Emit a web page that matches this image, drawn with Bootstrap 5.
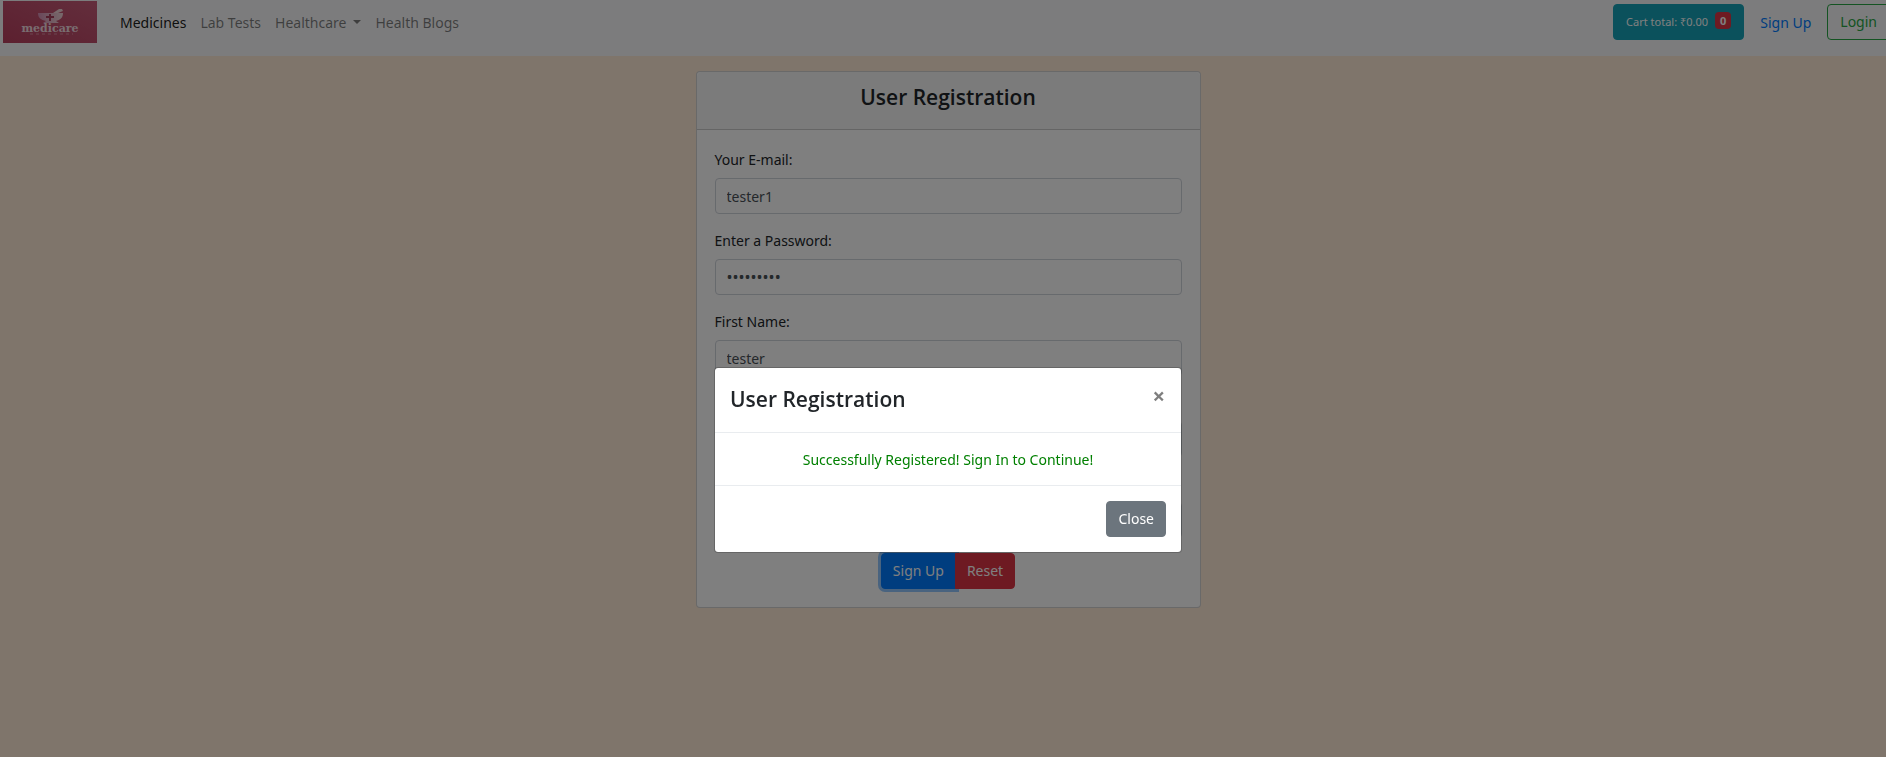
<!DOCTYPE html>
<html lang="en">
<head>
<meta charset="utf-8">
<meta name="viewport" content="width=device-width, initial-scale=1">
<title>Medicare - User Registration</title>
<link href="https://cdn.jsdelivr.net/npm/bootstrap@5.3.0/dist/css/bootstrap.min.css" rel="stylesheet">
<style>
  body { font-family: "Noto Sans", "Open Sans", sans-serif; font-size: 14px; line-height: 24px; color: #212529; background: #ffebd7; overflow: hidden; min-height: 100vh; }
  .topbar { height: 56px; padding: 1px 0 0 3px; background: #f8f9fa; align-items: flex-start; flex-wrap: nowrap; }
  .brand-logo { display: block; width: 94px; height: 42px; }
  .topbar .nav-link { padding: 10px 7px; font-size: 14px; line-height: 24px; color: rgba(0,0,0,.5); }
  .topbar .nav-link.active { color: rgba(0,0,0,.9); }
  .topbar .dropdown-toggle::after { margin-left: 7px; }
  .main-links { margin-left: 16px; }
  .account-links { gap: 16px; padding-top: 3px; margin-right: -4px; }
  .btn { height: 36px; padding: 0 12px; font-size: 14px; line-height: 34px; border-radius: 4px; }
  .btn-cart { background: #17a2b8; border-color: #17a2b8; color: #fff; font-size: 11px; }
  .btn-cart .badge { background: #dc3545; font-size: 11px; line-height: 11px; padding: 3px 5px; margin-left: 4px; border-radius: 4px; }
  .link-signup { color: #007bff; text-decoration: none; line-height: 38px; }
  .btn-login { color: #28a745; border-color: #28a745; }
  .page-area { padding: 15px 0 0 10px; }
  .register-card { width: 505px; max-width: 100%; margin: 0 auto; border-radius: 4px; }
  .register-card .card-header { padding: 11px 20px 17px; background: #f7f7f7; }
  h4 { font-family: "Open Sans", "Noto Sans", sans-serif; font-size: 21px; line-height: 29px; font-weight: 600; margin: 0; }
  .register-card .card-body { padding: 18px; }
  .field { min-height: 66px; margin-bottom: 15px; }
  .field label { display: block; margin-bottom: 6px; }
  .form-control { height: 36px; padding: 0 11px; font-size: 14px; line-height: 34px; color: #495057; border-color: #ced4da; border-radius: 4px; }
  .form-control[type="password"] { font-size: 16px; }
  .btn-group .btn { padding: 0 11px; }
  .btn-primary { background: #007bff; border-color: #007bff; box-shadow: 0 0 0 3px rgba(38,143,255,.5); }
  .btn-danger { background: #dc3545; border-color: #dc3545; }
  .modal { padding-left: 10px; }
  .modal-backdrop { z-index: 1040; }
  .modal-dialog { max-width: 468px; margin: 367px auto 0; }
  .modal-content { border-color: rgba(0,0,0,.2); border-radius: 4px; }
  .modal-header { height: 65px; padding: 17px 15px; align-items: flex-start; border-color: #e9ecef; }
  .modal-body { padding: 15px 15px 13px; color: green; text-align: center; }
  .modal-footer { padding: 15px; border-color: #e9ecef; }
  .modal-footer > * { margin: 0; }
  .modal-footer .btn { padding: 0 11px; }
  .btn-x { border: 0; padding: 0 1px 0 0; background: none; font-size: 22px; line-height: 20px; font-weight: 700; opacity: .5; }
</style>
</head>
<body>
<nav class="topbar navbar navbar-light">
  <a href="#" aria-label="medicare">
    <svg class="brand-logo" viewBox="0 0 94 42">
      <defs><linearGradient id="lg" x1="0" y1="1" x2="1" y2="0"><stop offset="0" stop-color="#b8405f"/><stop offset="1" stop-color="#c75c79"/></linearGradient>
      <linearGradient id="bowl" x1="0" y1="0" x2="1" y2="0"><stop offset="0" stop-color="#d58fb4"/><stop offset="1" stop-color="#f0d3d6"/></linearGradient></defs>
      <rect width="94" height="42" fill="url(#lg)"/>
      <path d="M35 12h25c0 5-3 7-7 8l3 2H40l3-2c-5-1-8-3-8-8z" fill="url(#bowl)"/>
      <path d="M50 12l6-4h3l1 2-5 2z" fill="#f0d3d6"/>
      <path d="M47 13v7M43 16h8" stroke="#a83c5b" stroke-width="2"/>
      <text x="47" y="31" text-anchor="middle" font-family="DejaVu Serif, serif" font-weight="700" font-size="11" fill="#f3dbe1">medicare</text>
      <path d="M27 33h43" stroke="#d88ba0" stroke-width="1" stroke-dasharray="3 3"/>
    </svg>
  </a>
  <ul class="main-links nav me-auto">
    <li class="nav-item"><a class="nav-link active" href="#">Medicines</a></li>
    <li class="nav-item"><a class="nav-link" href="#">Lab Tests</a></li>
    <li class="nav-item dropdown"><a class="nav-link dropdown-toggle" href="#">Healthcare</a></li>
    <li class="nav-item"><a class="nav-link" href="#">Health Blogs</a></li>
  </ul>
  <div class="account-links d-flex flex-shrink-0">
    <button type="button" class="btn btn-cart">Cart total: ₹0.00 <span class="badge">0</span></button>
    <a class="link-signup" href="#">Sign Up</a>
    <button type="button" class="btn btn-login">Login</button>
  </div>
</nav>
<main class="page-area">
  <div class="card register-card">
    <div class="card-header text-center"><h4>User Registration</h4></div>
    <form class="card-body">
      <div class="field"><label for="email">Your E-mail:</label><input id="email" class="form-control" type="text" value="tester1"></div>
      <div class="field"><label for="pw">Enter a Password:</label><input id="pw" class="form-control" type="password" value="testertes"></div>
      <div class="field"><label for="fn">First Name:</label><input id="fn" class="form-control" type="text" value="tester"></div>
      <div class="field d-flex align-items-end"><input aria-label="Last Name" class="form-control" type="text"></div>
      <div class="field d-flex align-items-end"><input aria-label="Phone" class="form-control" type="text"></div>
      <div class="text-center"><div class="btn-group"><button type="button" class="btn btn-primary">Sign Up</button><button type="reset" class="btn btn-danger">Reset</button></div></div>
    </form>
  </div>
</main>
<div class="modal d-block" tabindex="-1" role="dialog" aria-labelledby="dlg-title">
  <div class="modal-dialog">
    <div class="modal-content">
      <div class="modal-header"><h4 id="dlg-title">User Registration</h4><button type="button" class="btn-x" aria-label="Close">×</button></div>
      <div class="modal-body">Successfully Registered! Sign In to Continue!</div>
      <div class="modal-footer"><button type="button" class="btn btn-secondary">Close</button></div>
    </div>
  </div>
</div>
<div class="modal-backdrop show"></div>
<script src="https://cdn.jsdelivr.net/npm/bootstrap@5.3.0/dist/js/bootstrap.bundle.min.js"></script>
</body>
</html>
